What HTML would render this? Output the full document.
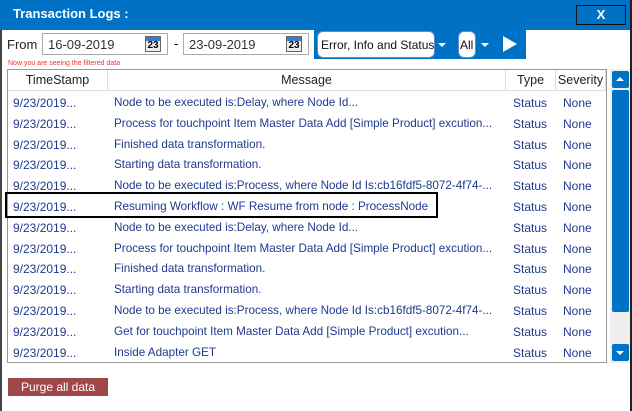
<!DOCTYPE html>
<html><head><style>
*{margin:0;padding:0;box-sizing:border-box}
body{width:632px;height:411px;background:#fff;font-family:"Liberation Sans",sans-serif;position:relative;overflow:hidden}
.abs{position:absolute}
.hdr{left:0;top:0;width:632px;height:30px;background:#0072c6}
.title{left:13px;top:6px;color:#fff;font-weight:bold;font-size:13px}
.xbtn{left:576px;top:5px;width:50px;height:20px;border:1px solid #111;color:#fff;font-weight:bold;font-size:13px;text-align:center;line-height:18px}
.lb{left:0;top:30px;width:2px;height:381px;background:#444}
.rb{left:630px;top:0;width:2px;height:411px;background:#222}
.blue2{left:314px;top:28px;width:212px;height:31px;background:#0072c6}
.date{top:33px;height:22px;width:126px;border:1px solid #aaa;font-size:13px;padding:3px 0 0 5px;color:#333}
.cal{top:36px;width:16px;height:16px;border:1px solid #666;background:linear-gradient(#3a7cc9 0 4px,#eee 4px);font-size:10px;font-weight:bold;text-align:center;line-height:14px;padding-top:2px}
.sel{top:31px;height:27px;border:1px solid #5590d0;border-radius:6px;background:#fff;font-size:12px;padding:6px 0 0 3px;color:#111;white-space:nowrap;overflow:hidden}
.arr{width:0;height:0;border-left:4px solid transparent;border-right:4px solid transparent;border-top:4px solid #fff}
.tbl{left:7px;top:69px;width:600px;height:294px;border:1px solid #999}
.th{top:70px;height:21px;font-size:12.5px;color:#222;border-right:1px solid #ddd;background:#fff;text-align:center;padding-top:3px;border-bottom:1px solid #ddd}
.row{font-size:12px;color:#1f3a8f;height:20.8px;position:absolute;left:8px;width:598px}
.row span{position:absolute;top:4px;white-space:nowrap}
.row span.m{font-size:11.7px}
</style></head><body>
<div class="abs hdr"></div>
<div class="abs title">Transaction Logs :</div>
<div class="abs xbtn">X</div>
<div class="abs lb"></div>
<div class="abs rb"></div>
<div class="abs blue2"></div>
<div class="abs" style="left:7px;top:37px;font-size:13px;color:#222">From</div>
<div class="abs date" style="left:42px">16-09-2019</div>
<div class="abs cal" style="left:145px">23</div>
<div class="abs" style="left:174px;top:36px;font-size:13px">-</div>
<div class="abs date" style="left:183px">23-09-2019</div>
<div class="abs cal" style="left:286px">23</div>
<div class="abs" style="left:8px;top:60px;font-size:7px;color:#e33">Now you are seeing the filtered data</div>
<div class="abs sel" style="left:317px;width:118px">Error, Info and Status</div>
<div class="abs arr" style="left:438px;top:43px"></div>
<div class="abs sel" style="left:458px;width:18px;padding-left:1px">All</div>
<div class="abs arr" style="left:481px;top:43px"></div>
<div class="abs" style="left:503px;top:36px;width:0;height:0;border-top:8px solid transparent;border-bottom:8px solid transparent;border-left:14px solid #fff"></div>
<div class="abs tbl"></div>
<div class="abs th" style="left:8px;width:100px">TimeStamp</div>
<div class="abs th" style="left:108px;width:398px">Message</div>
<div class="abs th" style="left:506px;width:50px">Type</div>
<div class="abs th" style="left:556px;width:50px">Severity</div>
<div class="abs" style="left:610px;top:69px;width:20px;height:294px;background:#eee"></div>
<div class="abs" style="left:612px;top:71px;width:17px;height:17px;background:#0072c6;border-radius:2px"></div>
<div class="abs" style="left:616px;top:77px;width:0;height:0;border-left:4px solid transparent;border-right:4px solid transparent;border-bottom:4px solid #fff"></div>
<div class="abs" style="left:612px;top:90px;width:17px;height:222px;background:#0072c6;border-radius:2px"></div>
<div class="abs" style="left:612px;top:344px;width:17px;height:17px;background:#0072c6;border-radius:2px"></div>
<div class="abs" style="left:616px;top:351px;width:0;height:0;border-left:4px solid transparent;border-right:4px solid transparent;border-top:4px solid #fff"></div>
<div id="rows"></div>
<div class="abs" style="left:5px;top:192px;width:433px;height:26px;border:2px solid #000"></div>
<div class="abs" style="left:8px;top:378px;width:100px;height:18px;background:#a0474a;color:#fff;font-size:12px;text-align:center;line-height:18px">Purge all data</div>
<script>
var m=["Node to be executed is:Delay, where Node Id...","Process for touchpoint Item Master Data Add [Simple Product] excution...","Finished data transformation.","Starting data transformation.","Node to be executed is:Process, where Node Id Is:cb16fdf5-8072-4f74-...","Resuming Workflow : WF Resume from node : ProcessNode","Node to be executed is:Delay, where Node Id...","Process for touchpoint Item Master Data Add [Simple Product] excution...","Finished data transformation.","Starting data transformation.","Node to be executed is:Process, where Node Id Is:cb16fdf5-8072-4f74-...","Get for touchpoint Item Master Data Add [Simple Product] excution...","Inside Adapter GET"];
var h="";m.forEach(function(t,i){h+='<div class="row" style="top:'+(92+i*20.8)+'px"><span style="left:5px">9/23/2019...</span><span class="m" style="left:106px">'+t+'</span><span style="left:505px">Status</span><span style="left:555px">None</span></div>';});
document.getElementById("rows").innerHTML=h;
</script>
</body></html>
